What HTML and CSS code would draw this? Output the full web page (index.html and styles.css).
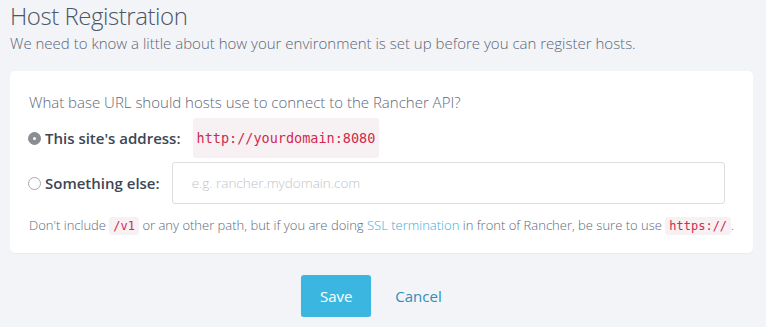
FILE: index.html
```html
<!DOCTYPE html>
<html>
<head>
<meta charset="utf-8">
<link rel="stylesheet" href="styles.css">
</head>
<body>
<div class="page">
  <h1 class="title">Host Registration</h1>
  <p class="sub">We need to know a little about how your environment is set up before you can register hosts.</p>
  <section class="card">
    <p class="question">What base URL should hosts use to connect to the Rancher API?</p>
    <div class="row">
      <span class="radio checked"></span>
      <span class="label">This site's address:</span>
      <code class="code-box">http://yourdomain:8080</code>
    </div>
    <div class="row">
      <span class="radio"></span>
      <span class="label">Something else:</span>
      <input class="text-input" type="text" placeholder="e.g. rancher.mydomain.com">
    </div>
    <p class="help">Don't include <code class="inline-code">/v1</code> or any other path, but if you are doing <a class="link" href="#">SSL termination</a> in front of Rancher, be sure to use <code class="inline-code">https://</code>.</p>
  </section>
  <div class="actions">
    <button class="btn-save">Save</button>
    <a class="btn-cancel" href="#">Cancel</a>
  </div>
</div>
</body>
</html>
```
FILE: styles.css
```css
html, body {
  margin: 0;
  padding: 0;
  background: #f3f4f8;
  font-family: "Open Sans", "Liberation Sans", sans-serif;
}
.page {
  padding: 0 13px 0 10px;
}
.title {
  margin: 0;
  font-size: 24px;
  font-weight: 300;
  letter-spacing: -0.45px;
  line-height: 32px;
  color: #4b5666;
}
.sub {
  margin: 1px 0 0;
  font-size: 15px;
  font-weight: 300;
  line-height: 20px;
  color: #5b6575;
}
.card {
  margin-top: 18px;
  background: #fff;
  border-radius: 5px;
  box-shadow: 0 1px 1px rgba(0,0,0,0.04);
  padding: 21px 19px 17px 19px;
}
.question {
  margin: 0 0 6px;
  font-size: 15px;
  font-weight: 300;
  line-height: 20px;
  color: #5e6878;
}
.row {
  display: flex;
  align-items: center;
  margin: 0 9px 4px 0;
}
.radio {
  width: 11px;
  height: 11px;
  border-radius: 50%;
  border: 1px solid #a5a9b0;
  background: #fff;
  margin: 0 4px 0 -1px;
  box-sizing: content-box;
}
.radio.checked {
  background: #8a8d92;
  border-color: #8a8d92;
  position: relative;
}
.radio.checked::after {
  content: "";
  position: absolute;
  left: 4px;
  top: 4px;
  width: 3px;
  height: 3px;
  border-radius: 50%;
  background: #fff;
}
.label {
  font-size: 15px;
  font-weight: 600;
  color: #3c4656;
  margin-right: 12px;
}
.code-box {
  display: flex;
  align-items: center;
  height: 40px;
  background: #f7f1f3;
  color: #d2294f;
  font-family: "DejaVu Sans Mono", monospace;
  font-size: 13.5px;
  padding: 0 4px;
  border-radius: 3px;
}
.text-input {
  flex: 1;
  height: 42px;
  box-sizing: border-box;
  border: 1px solid #dcdde0;
  border-radius: 3px;
  padding: 0 19px;
  font-family: "Open Sans", sans-serif;
  font-size: 13.5px;
  font-weight: 300;
  color: #333;
  outline: none;
}
.text-input::placeholder {
  color: #bfc3ca;
}
.help {
  margin: 11px 0 0;
  font-size: 13px;
  font-weight: 300;
  line-height: 20px;
  color: #5e6878;
  white-space: nowrap;
}
.inline-code {
  font-family: "DejaVu Sans Mono", monospace;
  font-size: 12px;
  color: #d2294f;
  background: #f7f1f3;
  border-radius: 3px;
  padding: 2px 4px;
}
.link {
  color: #3aaed8;
  text-decoration: none;
}
.actions {
  display: flex;
  justify-content: center;
  align-items: center;
  margin-top: 22px;
  gap: 4px;
}
.btn-save {
  width: 70px;
  height: 42px;
  border: none;
  border-radius: 3px;
  background: #3bb6e1;
  color: #fff;
  font-family: "Open Sans", sans-serif;
  font-size: 15px;
  box-shadow: 0 1px 1px rgba(0,0,0,0.12);
}
.btn-cancel {
  color: #2f8db8;
  font-size: 15px;
  text-decoration: none;
  padding: 0 20px;
}
```
